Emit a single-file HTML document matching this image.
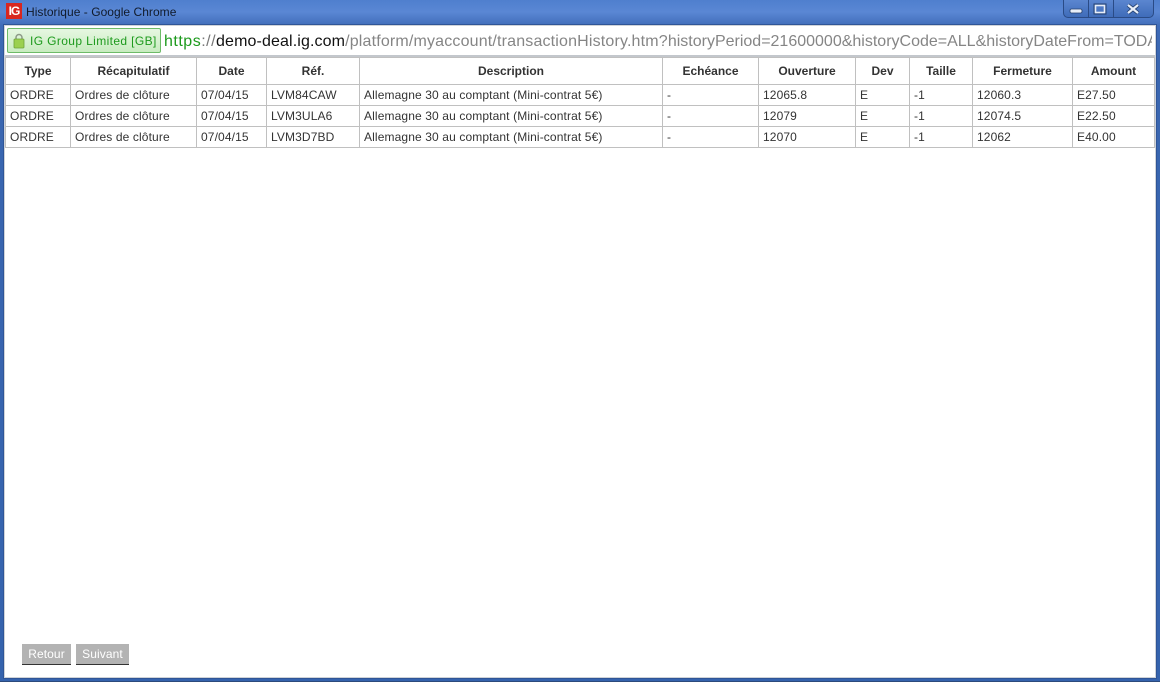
<!DOCTYPE html>
<html><head><meta charset="utf-8"><style>
html,body{margin:0;padding:0;width:1160px;height:682px;overflow:hidden;background:#fff}
body{position:relative;font-family:"Liberation Sans",sans-serif}
.a{position:absolute}
#frame{left:0;top:0;width:1160px;height:682px;background:linear-gradient(#4f7fce 0,#5a87d4 12px,#3f6cb8 26px,#3a66b0 60px,#3563ad 100%);box-shadow:inset 0 -1px 0 #2c4a7c}
#in{left:4px;top:25px;width:1152px;height:653px;background:#fff;box-shadow:0 0 0 1px #2f5597,inset 0 0 0 1px #cfd3d8}
#bar{left:5px;top:26px;width:1150px;height:29px;background:#fff;border-bottom:2px solid #c3c7cc;box-sizing:content-box}
#title{left:26px;top:5px;color:#101a2a;line-height:14px;white-space:nowrap;font-size:12px;letter-spacing:.04px}
#ig{left:6px;top:3px;width:16px;height:16px;background:#d8261f;color:#fff;font:bold 12px/16px "Liberation Sans",sans-serif;text-align:center;letter-spacing:-1px}
#ctl{left:1063px;top:0;width:91px;height:18px;box-sizing:border-box;background:linear-gradient(#5b86d0,#3f6cb9);border:1px solid #2a4b86;border-top:0;border-radius:0 0 5px 5px}
#ctl i{position:absolute;top:0;width:1px;height:17px;background:#2a4b86}
#ev{left:7px;top:28px;width:154px;height:25px;box-sizing:border-box;background:linear-gradient(#e6f7e1,#c8ecc0);border:1px solid #6dbb68;border-radius:2px;color:#1d9a1d;font-size:12px;line-height:24px;padding-left:22px;white-space:nowrap;letter-spacing:.38px}
#url{left:164px;top:32px;width:988px;height:20px;overflow:hidden;white-space:nowrap;font-size:16px;line-height:20px;color:#858585;letter-spacing:.17px}
.l{background:#c0c0c0}
.c{position:absolute;font-size:12px;line-height:14px;color:#333;white-space:nowrap;letter-spacing:.12px}
.h{position:absolute;font-size:12px;line-height:14px;font-weight:bold;color:#333;white-space:nowrap;text-align:center;top:64px}
.b{position:absolute;top:644px;height:20px;background:#b3b3b3;border-bottom:1px solid #333;color:#fff;font-size:12px;line-height:20px;text-align:center;letter-spacing:.1px}
</style></head><body>
<div class="a" id="frame"></div>
<div class="a" id="in"></div>
<div class="a" id="ig">IG</div>
<div class="a" id="title">Historique - Google Chrome</div>
<div class="a" id="ctl"><i style="left:24px"></i><i style="left:49px"></i>
<svg width="91" height="17" style="position:absolute;left:-1px;top:0"><rect x="7" y="9" width="12" height="4" rx="1.5" fill="#e8eef8" stroke="#24406f" stroke-width=".8"/><rect x="31" y="4" width="12" height="10" fill="none" stroke="#24406f"/><rect x="32.5" y="5.5" width="9" height="7" fill="none" stroke="#e8eef8" stroke-width="1.6"/><path d="M65 5l10 8M75 5l-10 8" stroke="#24406f" stroke-width="4"/><path d="M65 5l10 8M75 5l-10 8" stroke="#e8eef8" stroke-width="2.2"/></svg></div>
<div class="a" id="bar"></div>
<div class="a" id="ev">IG Group Limited [GB]
<svg width="12" height="16" style="position:absolute;left:5px;top:4px"><path d="M3 7V4.5a3 3 0 0 1 6 0V7" fill="none" stroke="#8d9a88" stroke-width="1.5"/><rect x="1" y="6" width="10" height="9" rx="1" fill="#9bd04f" stroke="#6ea33a" stroke-width=".8"/></svg></div>
<div class="a" id="url"><span style="color:#1d9a1d;letter-spacing:.5px">https</span><span style="color:#777;letter-spacing:.5px">://</span><span style="color:#111;letter-spacing:.12px">demo-deal.ig.com</span>/platform/myaccount/transactionHistory.htm?<span style="letter-spacing:0">historyPeriod=21600000&amp;historyCode=ALL&amp;historyDateFrom=TODAY&amp;x</span></div>

<div class="a l" style="left:5px;top:57px;width:1150px;height:1px"></div>
<div class="a l" style="left:5px;top:84px;width:1150px;height:1px"></div>
<div class="a l" style="left:5px;top:105px;width:1150px;height:1px"></div>
<div class="a l" style="left:5px;top:126px;width:1150px;height:1px"></div>
<div class="a l" style="left:5px;top:147px;width:1150px;height:1px"></div>
<div class="a l" style="left:5px;top:57px;width:1px;height:91px"></div>
<div class="a l" style="left:70px;top:57px;width:1px;height:91px"></div>
<div class="a l" style="left:196px;top:57px;width:1px;height:91px"></div>
<div class="a l" style="left:266px;top:57px;width:1px;height:91px"></div>
<div class="a l" style="left:359px;top:57px;width:1px;height:91px"></div>
<div class="a l" style="left:662px;top:57px;width:1px;height:91px"></div>
<div class="a l" style="left:758px;top:57px;width:1px;height:91px"></div>
<div class="a l" style="left:855px;top:57px;width:1px;height:91px"></div>
<div class="a l" style="left:909px;top:57px;width:1px;height:91px"></div>
<div class="a l" style="left:972px;top:57px;width:1px;height:91px"></div>
<div class="a l" style="left:1072px;top:57px;width:1px;height:91px"></div>
<div class="a l" style="left:1154px;top:57px;width:1px;height:91px"></div>

<div class="h" style="left:6px;width:64px">Type</div>
<div class="h" style="left:71px;width:125px">Récapitulatif</div>
<div class="h" style="left:197px;width:69px">Date</div>
<div class="h" style="left:267px;width:92px">Réf.</div>
<div class="h" style="left:360px;width:302px">Description</div>
<div class="h" style="left:663px;width:95px">Echéance</div>
<div class="h" style="left:759px;width:96px">Ouverture</div>
<div class="h" style="left:856px;width:53px">Dev</div>
<div class="h" style="left:910px;width:62px">Taille</div>
<div class="h" style="left:973px;width:99px">Fermeture</div>
<div class="h" style="left:1073px;width:81px">Amount</div>

<div class="c" style="left:10px;top:88px">ORDRE</div><div class="c" style="left:75px;top:88px">Ordres de clôture</div><div class="c" style="left:201px;top:88px">07/04/15</div><div class="c" style="left:271px;top:88px">LVM84CAW</div><div class="c" style="left:364px;top:88px">Allemagne 30 au comptant (Mini-contrat 5€)</div><div class="c" style="left:667px;top:88px">-</div><div class="c" style="left:763px;top:88px">12065.8</div><div class="c" style="left:860px;top:88px">E</div><div class="c" style="left:914px;top:88px">-1</div><div class="c" style="left:977px;top:88px">12060.3</div><div class="c" style="left:1077px;top:88px">E27.50</div>
<div class="c" style="left:10px;top:109px">ORDRE</div><div class="c" style="left:75px;top:109px">Ordres de clôture</div><div class="c" style="left:201px;top:109px">07/04/15</div><div class="c" style="left:271px;top:109px">LVM3ULA6</div><div class="c" style="left:364px;top:109px">Allemagne 30 au comptant (Mini-contrat 5€)</div><div class="c" style="left:667px;top:109px">-</div><div class="c" style="left:763px;top:109px">12079</div><div class="c" style="left:860px;top:109px">E</div><div class="c" style="left:914px;top:109px">-1</div><div class="c" style="left:977px;top:109px">12074.5</div><div class="c" style="left:1077px;top:109px">E22.50</div>
<div class="c" style="left:10px;top:130px">ORDRE</div><div class="c" style="left:75px;top:130px">Ordres de clôture</div><div class="c" style="left:201px;top:130px">07/04/15</div><div class="c" style="left:271px;top:130px">LVM3D7BD</div><div class="c" style="left:364px;top:130px">Allemagne 30 au comptant (Mini-contrat 5€)</div><div class="c" style="left:667px;top:130px">-</div><div class="c" style="left:763px;top:130px">12070</div><div class="c" style="left:860px;top:130px">E</div><div class="c" style="left:914px;top:130px">-1</div><div class="c" style="left:977px;top:130px">12062</div><div class="c" style="left:1077px;top:130px">E40.00</div>

<div class="b" style="left:22px;width:49px">Retour</div>
<div class="b" style="left:76px;width:53px">Suivant</div>
</body></html>
